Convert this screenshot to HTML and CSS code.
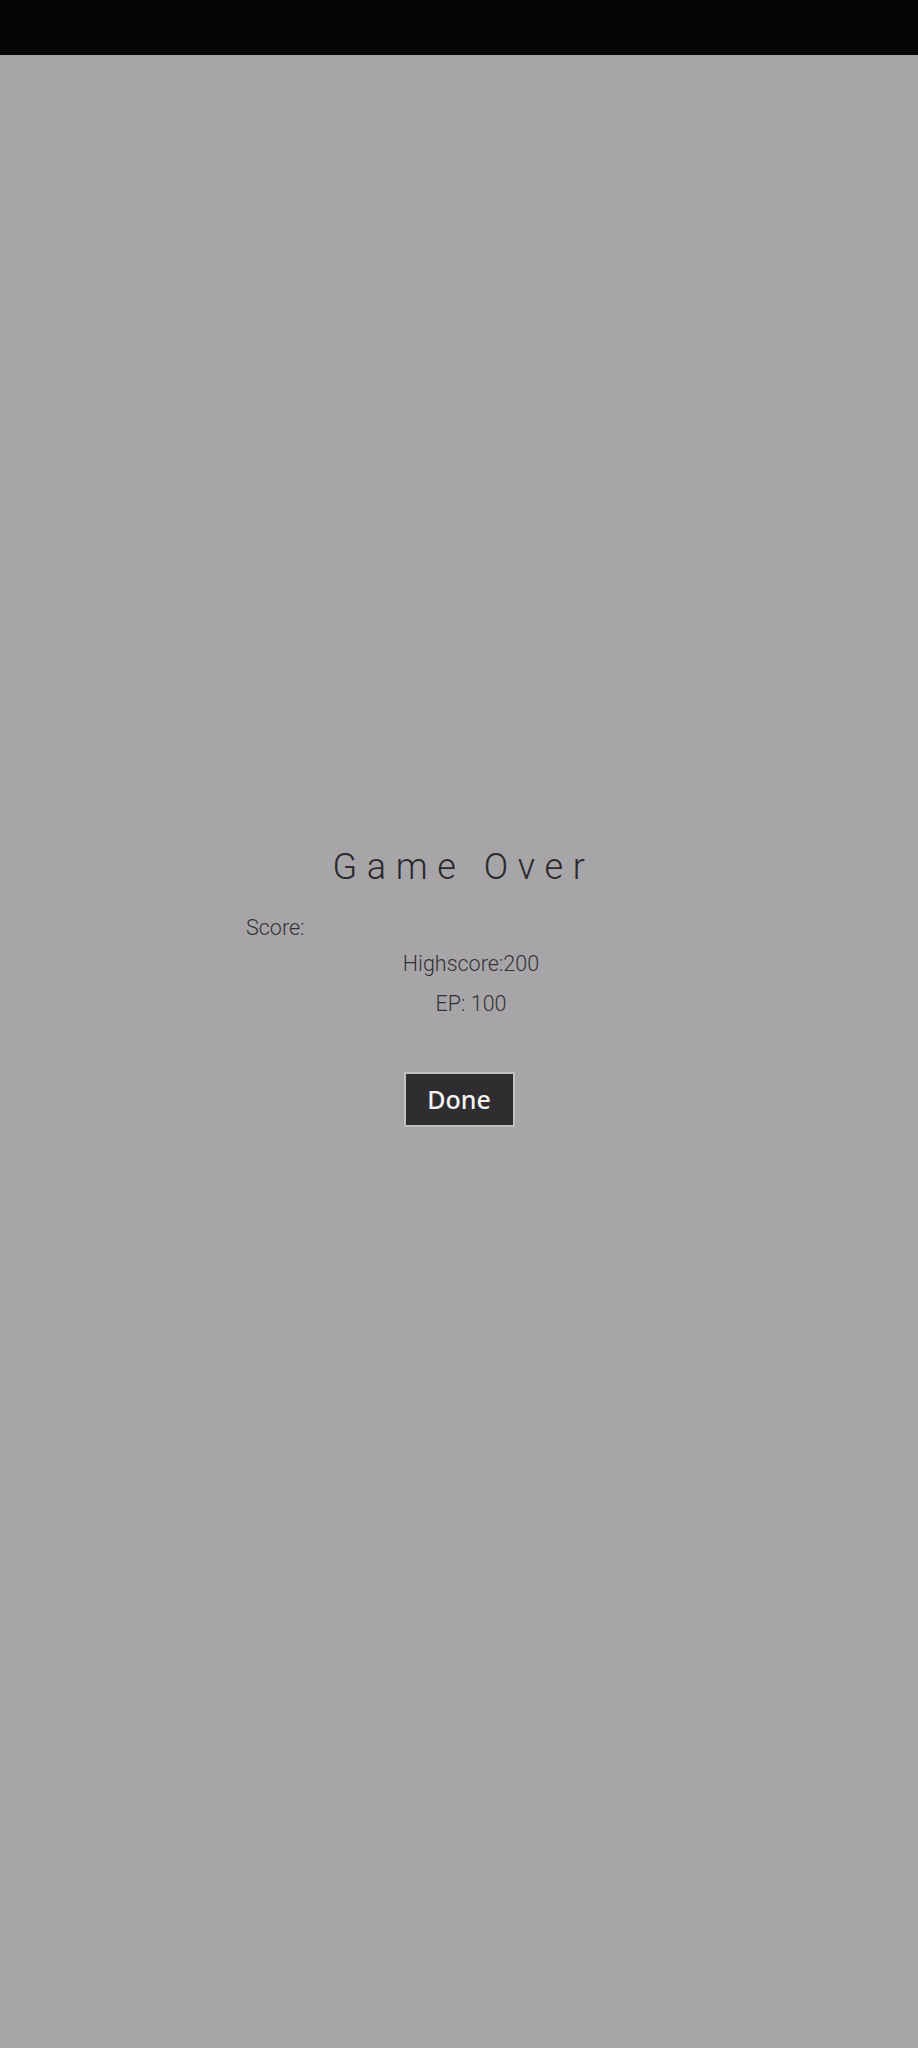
FILE: index.html
```html
<!DOCTYPE html>
<html>
<head>
<meta charset="utf-8">
<link rel="stylesheet" href="styles.css">
</head>
<body>
<div class="topbar"></div>
<main class="screen">
  <h1 class="title">Game Over</h1>
  <section class="stats">
    <div class="stat stat-left">Score:</div>
    <div class="stat stat-center stat-high">Highscore:200</div>
    <div class="stat stat-center stat-ep">EP: 100</div>
  </section>
  <button class="done">Done</button>
</main>
</body>
</html>
```
FILE: styles.css
```css
html, body {
  margin: 0;
  padding: 0;
  background: #a7a5a8;
}
body {
  width: 918px;
  height: 2048px;
  overflow: hidden;
  font-family: Roboto, "Liberation Sans", sans-serif;
}
.topbar {
  height: 55px;
  background: #050407;
}
.screen {
  display: flex;
  flex-direction: column;
  align-items: center;
  padding-top: 791px;
}
.title {
  margin: 0;
  font-size: 36px;
  line-height: 42px;
  font-weight: 300;
  letter-spacing: 9.6px;
  color: #2a292c;
  padding-left: 9px;
}
.stats {
  align-self: flex-start;
  margin-left: 246px;
  width: 450px;
  display: flex;
  flex-direction: column;
  margin-top: 27px;
}
.stat {
  font-size: 21.5px;
  line-height: 25px;
  font-weight: 300;
  color: #333235;
}
.stat-left { text-align: left; }
.stat-center { text-align: center; }
.stat-high { margin-top: 11px; }
.stat-ep { margin-top: 15px; }
.done {
  margin-top: 56px;
  width: 111px;
  height: 55px;
  background: #2f2d30;
  border: 2px solid #c2c0c3;
  color: #f4f4f4;
  font-family: "Noto Sans", "Open Sans", sans-serif;
  font-size: 25px;
  font-weight: 500;
  padding: 0 0 2px 0;
}
```
